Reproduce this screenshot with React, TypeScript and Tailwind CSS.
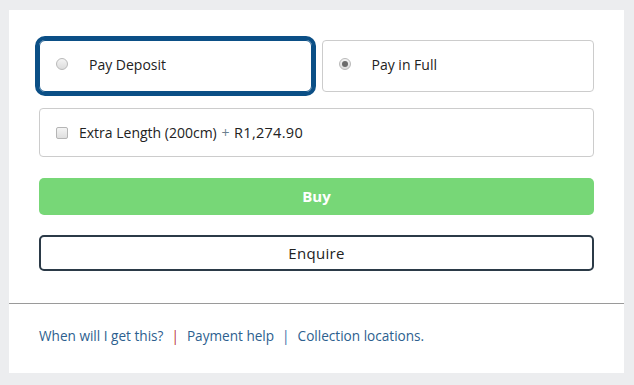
export default function App() {
  return (
    <div
      className="w-[634px] h-[385px] bg-[#ecedef] pt-[10px] pl-[9px]"
      style={{ fontFamily: '"Open Sans", "Noto Sans", sans-serif' }}
    >
      <div className="w-[615px] h-[363px] bg-white flex flex-col">
        <div className="px-[30px] pt-[30px]">
          <div className="grid grid-cols-2 gap-[10px]">
            <label className="h-[52px] flex items-center rounded-[6px] border border-[#0b4f86] outline-4 outline-[#0b4f86] pl-[16px] pb-[4px]">
              <span className="w-[12px] h-[12px] rounded-full border border-[#b9b9b9] bg-gradient-to-b from-[#f4f4f4] to-[#dcdcdc]" />
              <span className="ml-[21px] text-[14px] text-[#222]">Pay Deposit</span>
            </label>
            <label className="h-[52px] flex items-center rounded-[4px] border border-[#cccccc] pl-[16px] pb-[4px]">
              <span className="w-[12px] h-[12px] rounded-full border border-[#b9b9b9] bg-gradient-to-b from-[#f4f4f4] to-[#dcdcdc] flex items-center justify-center">
                <span className="w-[6px] h-[6px] rounded-full bg-[#6b6b6b]" />
              </span>
              <span className="ml-[21px] text-[14px] text-[#222]">Pay in Full</span>
            </label>
          </div>

          <label className="mt-[16px] h-[49px] flex items-center rounded-[4px] border border-[#cccccc] pl-[16px]">
            <span className="w-[12px] h-[12px] rounded-[2px] border border-[#b5b5b5] bg-gradient-to-b from-[#f4f4f4] to-[#dedede]" />
            <span className="ml-[11px] text-[14px] text-[#222]">
              Extra Length (200cm) <span className="text-[#6b7f8f] mx-[1px]">+</span>{' '}
              <span className="font-medium text-[14.5px] tracking-[0.3px]">R1,274.90</span>
            </span>
          </label>

          <button className="mt-[21px] w-full h-[37px] rounded-[5px] bg-[#77d777] text-white font-bold text-[15px]">
            Buy
          </button>

          <button className="mt-[20px] w-full h-[36px] rounded-[5px] border-2 border-[#2b3a47] text-[#222] font-medium text-[15px] tracking-[0.3px]">
            Enquire
          </button>
        </div>

        <div className="mt-[32px] border-t border-[#9a9a9a]" />

        <div className="px-[30px] pt-[22px] text-[13.6px] text-[#2d5f8f] flex items-center">
          <span>When will I get this?</span>
          <span className="mx-[8px] text-[#b83a3a]">|</span>
          <span>Payment help</span>
          <span className="mx-[8px] text-[#3a6ea5]">|</span>
          <span>Collection locations.</span>
        </div>
      </div>
    </div>
  )
}
